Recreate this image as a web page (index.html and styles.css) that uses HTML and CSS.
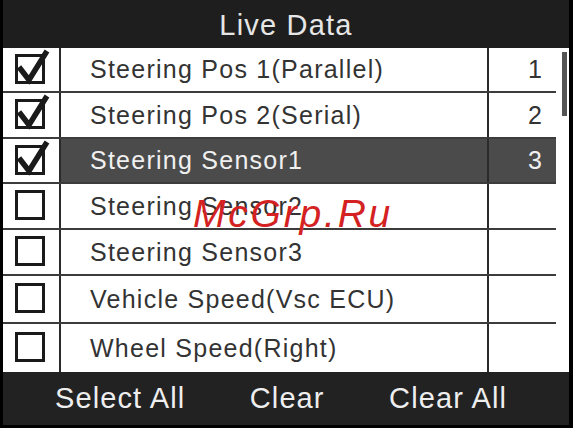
FILE: index.html
```html
<!DOCTYPE html>
<html>
<head>
<meta charset="utf-8">
<link rel="stylesheet" href="styles.css">
</head>
<body>
<div class="screen">
  <div class="header">Live Data</div>
  <div class="list">
    <div class="rows">
      <div class="row r1">
        <div class="c-check"><svg class="cb" viewBox="0 0 36 36" width="36" height="36"><rect x="1.5" y="6.5" width="27" height="27" fill="none" stroke="#1a1a1a" stroke-width="3"/><path d="M4 18 L14 31 L32 2" fill="none" stroke="#1a1a1a" stroke-width="5.5"/></svg></div>
        <div class="c-name">Steering Pos 1(Parallel)</div>
        <div class="c-val">1</div>
      </div>
      <div class="row r2">
        <div class="c-check"><svg class="cb" viewBox="0 0 36 36" width="36" height="36"><rect x="1.5" y="6.5" width="27" height="27" fill="none" stroke="#1a1a1a" stroke-width="3"/><path d="M4 18 L14 31 L32 2" fill="none" stroke="#1a1a1a" stroke-width="5.5"/></svg></div>
        <div class="c-name">Steering Pos 2(Serial)</div>
        <div class="c-val">2</div>
      </div>
      <div class="row r3 sel">
        <div class="c-check"><svg class="cb" viewBox="0 0 36 36" width="36" height="36"><rect x="1.5" y="6.5" width="27" height="27" fill="none" stroke="#1a1a1a" stroke-width="3"/><path d="M4 18 L14 31 L32 2" fill="none" stroke="#1a1a1a" stroke-width="5.5"/></svg></div>
        <div class="c-name">Steering Sensor1</div>
        <div class="c-val">3</div>
      </div>
      <div class="row r4">
        <div class="c-check"><svg class="cb" viewBox="0 0 36 36" width="36" height="36"><rect x="1.5" y="6.5" width="27" height="27" fill="none" stroke="#1a1a1a" stroke-width="3"/></svg></div>
        <div class="c-name">Steering Sensor2</div>
        <div class="c-val"></div>
      </div>
      <div class="row r5">
        <div class="c-check"><svg class="cb" viewBox="0 0 36 36" width="36" height="36"><rect x="1.5" y="6.5" width="27" height="27" fill="none" stroke="#1a1a1a" stroke-width="3"/></svg></div>
        <div class="c-name">Steering Sensor3</div>
        <div class="c-val"></div>
      </div>
      <div class="row r6">
        <div class="c-check"><svg class="cb" viewBox="0 0 36 36" width="36" height="36"><rect x="1.5" y="6.5" width="27" height="27" fill="none" stroke="#1a1a1a" stroke-width="3"/></svg></div>
        <div class="c-name">Vehicle Speed(Vsc ECU)</div>
        <div class="c-val"></div>
      </div>
      <div class="row r7">
        <div class="c-check"><svg class="cb" viewBox="0 0 36 36" width="36" height="36"><rect x="1.5" y="6.5" width="27" height="27" fill="none" stroke="#1a1a1a" stroke-width="3"/></svg></div>
        <div class="c-name">Wheel Speed(Right)</div>
        <div class="c-val"></div>
      </div>
    </div>
    <div class="scroll"><div class="thumb"></div></div>
  </div>
  <div class="footer">
    <span>Select All</span>
    <span>Clear</span>
    <span>Clear All</span>
  </div>
  <div class="watermark">McGrp.Ru</div>
</div>
</body>
</html>
```
FILE: styles.css
```css
html, body {
  margin: 0;
  padding: 0;
  background: #000;
}
.screen {
  position: relative;
  width: 573px;
  height: 428px;
  box-sizing: border-box;
  padding: 0 4px 3px 3px;
  background: #000;
  display: flex;
  flex-direction: column;
  font-family: "Liberation Sans", sans-serif;
  overflow: hidden;
}
.header {
  height: 48px;
  flex: none;
  background: #1e1e1e;
  color: #e6e6e6;
  font-size: 29px;
  letter-spacing: 1.2px;
  display: flex;
  align-items: center;
  justify-content: center;
  padding-top: 2px;
  box-sizing: border-box;
}
.list {
  display: flex;
  flex: none;
  height: 324px;
  background: #fff;
}
.rows {
  width: 553px;
  display: flex;
  flex-direction: column;
}
.row {
  display: flex;
  box-sizing: border-box;
  border-top: 2px solid #3c3c3c;
}
.r1 { height: 43px; border-top: none; }
.r2 { height: 46px; }
.r3 { height: 45px; }
.r4 { height: 46px; }
.r5 { height: 46px; }
.r6 { height: 48px; }
.r7 { height: 50px; }
.c-check {
  width: 58px;
  flex: none;
  box-sizing: border-box;
  border-right: 2px solid #2a2a2a;
  background: #fff;
  display: flex;
  align-items: center;
  justify-content: center;
  padding-right: 3px;
}
.cb {
  display: block;
  margin-top: -6px;
  margin-left: 6px;
}
.c-name {
  width: 428px;
  flex: none;
  box-sizing: border-box;
  border-right: 2px solid #2a2a2a;
  padding-left: 29px;
  font-size: 25px;
  letter-spacing: 1.25px;
  color: #333;
  display: flex;
  align-items: center;
}
.c-val {
  width: 67px;
  flex: none;
  box-sizing: border-box;
  padding-right: 14px;
  font-size: 25px;
  color: #333;
  display: flex;
  align-items: center;
  justify-content: flex-end;
}
.sel .c-name, .sel .c-val {
  background: #4b4b4b;
  color: #f0f0f0;
}
.scroll {
  width: 13px;
  background: #fff;
  position: relative;
}
.thumb {
  position: absolute;
  left: 6px;
  top: 4px;
  width: 5px;
  height: 64px;
  background: #555;
}
.footer {
  flex: 1;
  background: #222;
  color: #eee;
  font-size: 29px;
  letter-spacing: 1.1px;
  display: flex;
  align-items: center;
  justify-content: space-between;
  padding: 0 62px 0 52px;
}
.watermark {
  position: absolute;
  left: 193px;
  top: 192px;
  font-size: 39px;
  font-style: italic;
  letter-spacing: 2.8px;
  color: #d42222;
}
```
